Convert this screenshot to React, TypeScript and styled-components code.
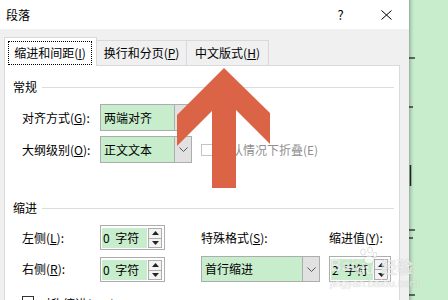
import React from 'react';
import styled, { createGlobalStyle } from 'styled-components';

const GlobalStyle = createGlobalStyle`
  html, body {
    margin: 0;
    padding: 0;
  }
  body {
    font-family: "Noto Sans CJK SC", "Microsoft YaHei", sans-serif;
    font-size: 12px;
    line-height: 16px;
    color: #000;
    overflow: hidden;
  }
`;

const EYE_GREEN = '#c7edcc';
const FIELD_BORDER = '#adadad';

const Screen = styled.div`
  position: relative;
  display: flex;
  width: 448px;
  height: 300px;
  overflow: hidden;
  background: ${EYE_GREEN};
`;

const Dialog = styled.div`
  flex: 0 0 409px;
  display: flex;
  flex-direction: column;
  background: #f0f0f0;
`;

const TitleBar = styled.div`
  flex: 0 0 29px;
  display: flex;
  align-items: center;
  padding-left: 6px;
  background: #fff;
`;

const Title = styled.span`
  flex: 1;
`;

const TitleButton = styled.div<{ $w: number }>`
  width: ${(p) => p.$w}px;
  height: 29px;
  display: flex;
  align-items: center;
  justify-content: center;
  font-size: 13px;
`;

const Body = styled.div`
  flex: 1;
  display: flex;
  flex-direction: column;
  padding: 0 9px 0 4px;
`;

const TabStrip = styled.div`
  flex: 0 0 36px;
  display: flex;
  align-items: flex-end;
`;

const Tab = styled.div<{ $w: number; $active?: boolean }>`
  box-sizing: border-box;
  width: ${(p) => p.$w}px;
  height: ${(p) => (p.$active ? 29 : 25)}px;
  margin-bottom: ${(p) => (p.$active ? -1 : 0)}px;
  margin-left: ${(p) => (p.$active ? 0 : -1)}px;
  padding: ${(p) => (p.$active ? '3px 4px 1px 3px' : '0')};
  display: flex;
  align-items: ${(p) => (p.$active ? 'stretch' : 'center')};
  justify-content: center;
  background: ${(p) => (p.$active ? '#fff' : '#f0f0f0')};
  border: 1px solid #d9d9d9;
  border-bottom: none;
  position: relative;
  z-index: ${(p) => (p.$active ? 1 : 0)};
`;

const FocusRing = styled.div`
  flex: 1;
  display: flex;
  align-items: center;
  justify-content: center;
  border: 1px dotted #000;
`;

const Key = styled.span`
  text-decoration: underline;
  text-underline-offset: 1px;
`;

const Panel = styled.div`
  flex: 1;
  display: flex;
  flex-direction: column;
  padding: 0 5px 0 8px;
  background: #fff;
  border: 1px solid #d9d9d9;
  border-bottom: none;
`;

const SectionHeader = styled.div<{ $top: number }>`
  display: flex;
  align-items: center;
  gap: 5px;
  margin-top: ${(p) => p.$top}px;
  height: 16px;
`;

const SectionLine = styled.div`
  flex: 1;
  height: 1px;
  background: #dcdcdc;
`;

const FormGrid = styled.div<{ $rows: string; $gap: number }>`
  display: grid;
  grid-template-columns: 78px 101px 128px 1fr;
  grid-template-rows: ${(p) => p.$rows};
  row-gap: ${(p) => p.$gap}px;
  align-items: center;
  margin-top: 9px;
  padding-left: 9px;
`;

const Label = styled.span<{ $col?: number }>`
  grid-column: ${(p) => p.$col ?? 1};
  white-space: nowrap;
`;

const Combo = styled.div<{ $w: number; $h: number; $col?: number }>`
  grid-column: ${(p) => p.$col ?? 2};
  box-sizing: border-box;
  width: ${(p) => p.$w}px;
  height: ${(p) => p.$h}px;
  display: flex;
  border: 1px solid ${FIELD_BORDER};
  background: ${EYE_GREEN};
`;

const ComboText = styled.div`
  flex: 1;
  display: flex;
  align-items: center;
  padding-left: 3px;
`;

const ComboButton = styled.div`
  flex: 0 0 16px;
  display: flex;
  align-items: center;
  justify-content: center;
  border-left: 1px solid ${FIELD_BORDER};
  background: #e1e1e1;
`;

const Spin = styled.div<{ $w: number; $h: number; $col?: number }>`
  grid-column: ${(p) => p.$col ?? 2};
  align-self: end;
  box-sizing: border-box;
  width: ${(p) => p.$w}px;
  height: ${(p) => p.$h}px;
  display: flex;
  gap: 1px;
  padding: 2px 2px 1px 1px;
  border: 1px solid ${FIELD_BORDER};
  background: #fff;
`;

const SpinText = styled.div`
  flex: 1;
  display: flex;
  align-items: center;
  padding-left: 1px;
  white-space: pre;
  word-spacing: 3px;
  background: ${EYE_GREEN};
`;

const SpinButtons = styled.div`
  flex: 0 0 14px;
  display: flex;
  flex-direction: column;
`;

const SpinButton = styled.div`
  flex: 1;
  display: flex;
  align-items: center;
  justify-content: center;
  border: 1px solid ${FIELD_BORDER};
  background: #f3f3f3;
  & + & {
    border-top: none;
  }
`;

const CheckRow = styled.div<{ $col?: number; $disabled?: boolean }>`
  grid-column: ${(p) => p.$col ?? 3} / span 2;
  display: flex;
  align-items: center;
  gap: 6px;
  color: ${(p) => (p.$disabled ? '#8f8f8f' : '#000')};
`;

const Box = styled.span<{ $disabled?: boolean }>`
  box-sizing: border-box;
  width: 12px;
  height: 12px;
  border: 1px solid ${(p) => (p.$disabled ? '#c4c4c4' : '#333')};
  background: #fff;
`;

const BottomCheck = styled(CheckRow)`
  margin-top: 14px;
  padding-left: 9px;
  align-items: flex-start;
  gap: 5px;
`;

const Side = styled.div`
  flex: 1;
  position: relative;
  background: linear-gradient(to right, #93ad97 0px, #b4d6b9 2px, ${EYE_GREEN} 5px);
`;

const SideMarks = styled.svg`
  position: absolute;
  left: 0;
  top: 0;
`;

const ArrowLayer = styled.svg`
  position: absolute;
  left: 0;
  top: 0;
  pointer-events: none;
`;

const Watermark = styled.div`
  position: absolute;
  left: 330px;
  top: 244px;
  display: flex;
  flex-direction: column;
  align-items: flex-start;
  color: rgba(255, 255, 255, 0.75);
  text-shadow: 0 0 1px rgba(90, 90, 90, 0.4);
  pointer-events: none;
`;

const WatermarkTop = styled.div`
  display: flex;
  align-items: flex-end;
  font-family: "Liberation Sans", sans-serif;
  font-size: 16px;
  font-weight: bold;
  line-height: 20px;
  height: 32px;
`;

const WatermarkBrand = styled.span`
  font-family: "Noto Sans CJK SC", sans-serif;
  font-size: 16px;
  margin-left: 4px;
`;

const WatermarkUrl = styled.div`
  font-family: "Liberation Sans", sans-serif;
  font-size: 11px;
  line-height: 12px;
  margin-top: 1px;
`;

const Chevron: React.FC = () => (
  <svg width="9" height="5" viewBox="0 0 9 5">
    <polyline points="0.5,0.5 4.5,4.5 8.5,0.5" fill="none" stroke="#555" strokeWidth="1" />
  </svg>
);

const Triangle: React.FC<{ up?: boolean }> = ({ up }) => (
  <svg width="7" height="4" viewBox="0 0 7 4">
    <polygon points={up ? '0,4 3.5,0 7,4' : '0,0 7,0 3.5,4'} fill="#222" />
  </svg>
);

const ComboBox: React.FC<{ text: string; w: number; h: number; col?: number }> = ({ text, w, h, col }) => (
  <Combo $w={w} $h={h} $col={col}>
    <ComboText>{text}</ComboText>
    <ComboButton>
      <Chevron />
    </ComboButton>
  </Combo>
);

const SpinBox: React.FC<{ text: string; w: number; h: number; col?: number }> = ({ text, w, h, col }) => (
  <Spin $w={w} $h={h} $col={col}>
    <SpinText>{text}</SpinText>
    <SpinButtons>
      <SpinButton>
        <Triangle up />
      </SpinButton>
      <SpinButton>
        <Triangle />
      </SpinButton>
    </SpinButtons>
  </Spin>
);

const sideTicks = [
  { y: 58, len: 6 },
  { y: 107, len: 4 },
  { y: 230, len: 6 },
  { y: 238, len: 4 },
  { y: 295, len: 6 },
];

const App: React.FC = () => {
  return (
    <Screen>
      <GlobalStyle />
      <Dialog>
        <TitleBar>
          <Title>段落</Title>
          <TitleButton $w={45}>?</TitleButton>
          <TitleButton $w={46}>
            <svg width="11" height="10" viewBox="0 0 11 10">
              <path d="M0.5 0.5 L10.5 9.5 M10.5 0.5 L0.5 9.5" stroke="#000" strokeWidth="1" fill="none" />
            </svg>
          </TitleButton>
        </TitleBar>
        <Body>
          <TabStrip>
            <Tab $w={93} $active>
              <FocusRing>
                缩进和间距(<Key>I</Key>)
              </FocusRing>
            </Tab>
            <Tab $w={91}>
              换行和分页(<Key>P</Key>)
            </Tab>
            <Tab $w={83}>
              中文版式(<Key>H</Key>)
            </Tab>
          </TabStrip>
          <Panel>
            <SectionHeader $top={13}>
              常规
              <SectionLine />
            </SectionHeader>
            <FormGrid $rows="27px 27px" $gap={5}>
              <Label>
                对齐方式(<Key>G</Key>):
              </Label>
              <ComboBox text="两端对齐" w={92} h={27} />
              <Label>
                大纲级别(<Key>O</Key>):
              </Label>
              <ComboBox text="正文文本" w={92} h={27} />
              <CheckRow $col={3} $disabled>
                <Box $disabled />
                默认情况下折叠(E)
              </CheckRow>
            </FormGrid>
            <SectionHeader $top={37}>
              缩进
              <SectionLine />
            </SectionHeader>
            <FormGrid $rows="25px 26px" $gap={6}>
              <Label>
                左侧(<Key>L</Key>):
              </Label>
              <SpinBox text="0 字符" w={65} h={25} />
              <Label $col={3}>
                特殊格式(<Key>S</Key>):
              </Label>
              <Label $col={4}>
                缩进值(<Key>Y</Key>):
              </Label>
              <Label>
                右侧(<Key>R</Key>):
              </Label>
              <SpinBox text="0 字符" w={65} h={25} />
              <ComboBox text="首行缩进" w={119} h={26} col={3} />
              <SpinBox text="2 字符" w={62} h={26} col={4} />
            </FormGrid>
            <BottomCheck $col={1}>
              <Box />
              对称缩进(<Key>M</Key>)
            </BottomCheck>
          </Panel>
        </Body>
      </Dialog>
      <Side>
        <SideMarks width="39" height="300" viewBox="0 0 39 300">
          {sideTicks.map((t) => (
            <line key={t.y} x1="0" y1={t.y} x2={t.len} y2={t.y} stroke="#111" strokeWidth="1.2" />
          ))}
          <line x1="1.5" y1="165" x2="1.5" y2="186" stroke="#222" strokeWidth="1.5" />
        </SideMarks>
      </Side>
      <Watermark>
        <WatermarkTop>
          Bai
          <svg width="22" height="30" viewBox="0 0 22 30">
            <g fill="rgba(255,255,255,0.7)" stroke="rgba(120,120,120,0.3)" strokeWidth="0.8">
              <ellipse cx="8" cy="6" rx="2.4" ry="3" />
              <ellipse cx="15" cy="4" rx="2.4" ry="3" />
              <ellipse cx="20" cy="9" rx="2" ry="2.8" />
              <ellipse cx="14" cy="14" rx="5" ry="4" />
            </g>
            <text x="1" y="28" fontSize="15" fontWeight="bold" fill="rgba(255,255,255,0.75)">
              du
            </text>
          </svg>
          <WatermarkBrand>经验</WatermarkBrand>
        </WatermarkTop>
        <WatermarkUrl>jingyan.baidu.com</WatermarkUrl>
      </Watermark>
      <ArrowLayer width="448" height="300" viewBox="0 0 448 300">
        <polygon
          points="224,68 270,113 270,144 236,110 236,188 212,188 212,111 177,146 177,115"
          fill="#dc6446"
        />
      </ArrowLayer>
    </Screen>
  );
};

export default App;
